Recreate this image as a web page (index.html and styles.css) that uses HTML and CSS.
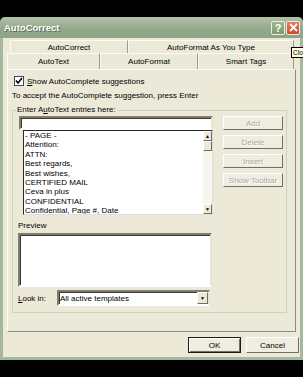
FILE: index.html
```
<!DOCTYPE html>
<html lang="en">
<head>
    <meta charset="UTF-8">
    <title>AutoCorrect</title>
    <link rel="stylesheet" href="styles.css">
</head>
<body>
    <div class="window">
        <div class="titlebar">
            <span class="title">AutoCorrect</span>
            <div class="caption-buttons">
                <span class="cap-btn help">?</span>
                <span class="cap-btn close">
                    <svg width="9" height="9" viewBox="0 0 9 9"><path d="M1 1 L8 8 M8 1 L1 8" stroke="#fff" stroke-width="1.8"/></svg>
                </span>
            </div>
        </div>

        <div class="frame">
            <div class="tabs">
                <div class="tab-row back">
                    <div class="tab t1">AutoCorrect</div>
                    <div class="tab t2">AutoFormat As You Type</div>
                </div>
                <div class="tab-row front">
                    <div class="tab t3 selected">AutoText</div>
                    <div class="tab t4">AutoFormat</div>
                    <div class="tab t5">Smart Tags</div>
                </div>
            </div>

            <div class="page">
                <div class="check-row">
                    <span class="checkbox">
                        <svg width="8" height="8" viewBox="0 0 8 8"><path d="M1 3.5 L3 6 L7 1" fill="none" stroke="#000" stroke-width="1.6"/></svg>
                    </span>
                    <span><u>S</u>how AutoComplete suggestions</span>
                </div>
                <div class="hint">To accept the AutoComplete suggestion, press Enter</div>

                <div class="group">
                    <div class="legend">Enter A<u>u</u>toText entries here:</div>
                    <div class="group-top">
                        <div class="entry-col">
                            <div class="textbox"></div>
                            <div class="listbox">
                                <ul class="items">
                                    <li>- PAGE -</li>
                                    <li>Attention:</li>
                                    <li>ATTN:</li>
                                    <li>Best regards,</li>
                                    <li>Best wishes,</li>
                                    <li>CERTIFIED MAIL</li>
                                    <li>Ceva in plus</li>
                                    <li>CONFIDENTIAL</li>
                                    <li>Confidential, Page #, Date</li>
                                </ul>
                                <div class="scrollbar">
                                    <span class="sb-btn">&#9650;</span>
                                    <span class="sb-thumb"></span>
                                    <span class="sb-track"></span>
                                    <span class="sb-btn">&#9660;</span>
                                </div>
                            </div>
                        </div>
                        <div class="side-buttons">
                            <span class="btn disabled">Add</span>
                            <span class="btn disabled">Delete</span>
                            <span class="btn disabled">Insert</span>
                            <span class="btn disabled">Show Toolbar</span>
                        </div>
                    </div>

                    <div class="preview-label">Preview</div>
                    <div class="preview"></div>

                    <div class="lookin-row">
                        <span class="lookin-label"><u>L</u>ook in:</span>
                        <div class="combo">
                            <span class="combo-text">All active templates</span>
                            <span class="combo-arrow">&#9660;</span>
                        </div>
                    </div>
                </div>
            </div>

            <div class="footer">
                <span class="btn default">OK</span>
                <span class="btn">Cancel</span>
            </div>
        </div>
    </div>

    <div class="tooltip">Clo</div>
</body>
</html>
```

FILE: styles.css
```
body {
    margin: 0;
    background: #000;
    font-family: "Liberation Sans", Arial, sans-serif;
    font-size: 8px;
    color: #000;
    width: 303px;
    height: 377px;
    overflow: hidden;
    position: relative;
}

.window {
    margin-top: 17px;
    width: 303px;
}

/* title bar */
.titlebar {
    height: 21px;
    display: flex;
    align-items: center;
    justify-content: space-between;
    padding: 0 4px;
    background: linear-gradient(#b2c2a8, #93a78a 60%, #8ea485);
    border-radius: 5px 5px 0 0;
}

.title {
    color: #fff;
    font-weight: bold;
    font-size: 9.5px;
    text-shadow: 1px 1px 0 #5b6b52;
}

.caption-buttons {
    display: flex;
    gap: 1px;
    margin-right: -1px;
}

.cap-btn {
    width: 14px;
    height: 14px;
    box-sizing: border-box;
    border: 1px solid #e8eee0;
    border-radius: 2px;
    display: flex;
    align-items: center;
    justify-content: center;
    color: #fff;
    font-weight: bold;
    font-size: 11px;
}

.help {
    background: linear-gradient(#9fb792, #7d9a6f);
}

.close {
    background: linear-gradient(#e87a5c, #cf4a2c);
}

/* frame */
.frame {
    height: 322px;
    box-sizing: border-box;
    border: 3px solid #a3b99a;
    border-top: 0;
    background: #ece9d8;
}

.tabs {
    padding-top: 2px;
}

.tab-row {
    display: flex;
}

.tab-row.back {
    height: 13px;
    padding-left: 7px;
}

.tab-row.front {
    height: 16px;
    padding-left: 4px;
}

.tab {
    box-sizing: border-box;
    display: flex;
    align-items: center;
    justify-content: center;
    border-right: 1px solid #9c9a8e;
    border-left: 1px solid #fbfaf5;
    border-top: 1px solid #fbfaf5;
}

.t1 { width: 118px; }
.t2 { width: 166px; }
.t3 { width: 93px; }
.t4 { width: 98px; }
.t5 { width: 96px; }

.page {
    margin-left: 4px;
    width: 289px;
    height: 263px;
    box-sizing: border-box;
    border: 1px solid #fbfaf5;
    border-right-color: #8e8c80;
    border-bottom-color: #8e8c80;
}

.check-row {
    display: flex;
    align-items: center;
    gap: 3px;
    margin: 6px 0 0 6px;
    height: 10px;
}

.checkbox {
    width: 10px;
    height: 10px;
    box-sizing: border-box;
    border: 1px solid #3a4a5a;
    background: #fff;
    display: flex;
    align-items: center;
    justify-content: center;
}

.hint {
    margin: 5px 0 0 4px;
    line-height: 10px;
}

/* group box */
.group {
    margin: 9px 0 0 4px;
    width: 275px;
    height: 203px;
    box-sizing: border-box;
    border: 1px solid #d0d0bf;
}

.legend {
    width: fit-content;
    margin: -6px 0 0 3px;
    padding: 0 1px;
    line-height: 10px;
    background: #ece9d8;
}

.group-top {
    display: flex;
    margin-top: 1px;
}

.entry-col {
    margin-left: 6px;
    width: 194px;
}

.textbox {
    height: 14px;
    box-sizing: border-box;
    background: #fff;
    border: 2px solid;
    border-color: #7f7c70 #e6e4d8 #fff #7f7c70;
    box-shadow: inset 1px 1px 0 #3c3a33;
}

.listbox {
    margin-left: 4px;
    height: 85px;
    box-sizing: border-box;
    background: #fff;
    border: 1px solid #2c2a24;
    border-right-color: #ddd;
    border-bottom-color: #ddd;
    display: flex;
}

.items {
    flex: 1;
    margin: 0;
    padding: 0 0 0 1px;
    list-style: none;
    line-height: 9.4px;
    overflow: hidden;
}

.scrollbar {
    width: 9px;
    display: flex;
    flex-direction: column;
    background: #f6f5ef;
}

.sb-btn,
.sb-thumb {
    height: 10px;
    box-sizing: border-box;
    background: #ece9d8;
    border: 1px solid;
    border-color: #fff #6f6d62 #6f6d62 #fff;
    font-size: 5px;
    display: flex;
    align-items: center;
    justify-content: center;
}

.sb-track {
    flex: 1;
}

.side-buttons {
    margin-left: 10px;
    display: flex;
    flex-direction: column;
    gap: 5px;
}

.btn {
    width: 60px;
    height: 14px;
    box-sizing: border-box;
    display: flex;
    align-items: center;
    justify-content: center;
    background: #efede2;
    border: 1px solid;
    border-color: #fff #716f64 #716f64 #fff;
}

.btn.disabled {
    color: #aca899;
    text-shadow: 1px 1px 0 #fff;
}

.preview-label {
    margin: 6px 0 0 5px;
    line-height: 10px;
}

.preview {
    margin: 2px 0 0 5px;
    width: 194px;
    height: 54px;
    box-sizing: border-box;
    background: #fff;
    border: 2px solid;
    border-color: #7f7c70 #e6e4d8 #fff #7f7c70;
    box-shadow: inset 1px 1px 0 #3c3a33;
}

.lookin-row {
    display: flex;
    align-items: center;
    margin: 3px 0 0 5px;
}

.lookin-label {
    width: 39px;
}

.combo {
    width: 153px;
    height: 16px;
    box-sizing: border-box;
    background: #fff;
    border: 2px solid;
    border-color: #7f7c70 #e6e4d8 #fff #7f7c70;
    box-shadow: inset 1px 1px 0 #3c3a33;
    display: flex;
    align-items: center;
    justify-content: space-between;
    padding-left: 1px;
}

.combo-arrow {
    width: 11px;
    height: 12px;
    box-sizing: border-box;
    background: #ece9d8;
    border: 1px solid;
    border-color: #fff #6f6d62 #6f6d62 #fff;
    font-size: 5px;
    display: flex;
    align-items: center;
    justify-content: center;
}

/* footer */
.footer {
    display: flex;
    justify-content: flex-end;
    gap: 5px;
    padding: 5px 1px 0 0;
}

.footer .btn {
    width: 53px;
    height: 16px;
}

.footer .btn.default {
    border: 1px solid #1a1a1a;
    box-shadow: inset 1px 1px 0 #fff, inset -1px -1px 0 #716f64;
}

.tooltip {
    position: absolute;
    left: 291px;
    top: 47px;
    width: 12px;
    height: 11px;
    box-sizing: border-box;
    padding-left: 1px;
    border: 1px solid #000;
    border-right: 0;
    background: #ffffe1;
    font-size: 6.5px;
    line-height: 9px;
    white-space: nowrap;
}
```
